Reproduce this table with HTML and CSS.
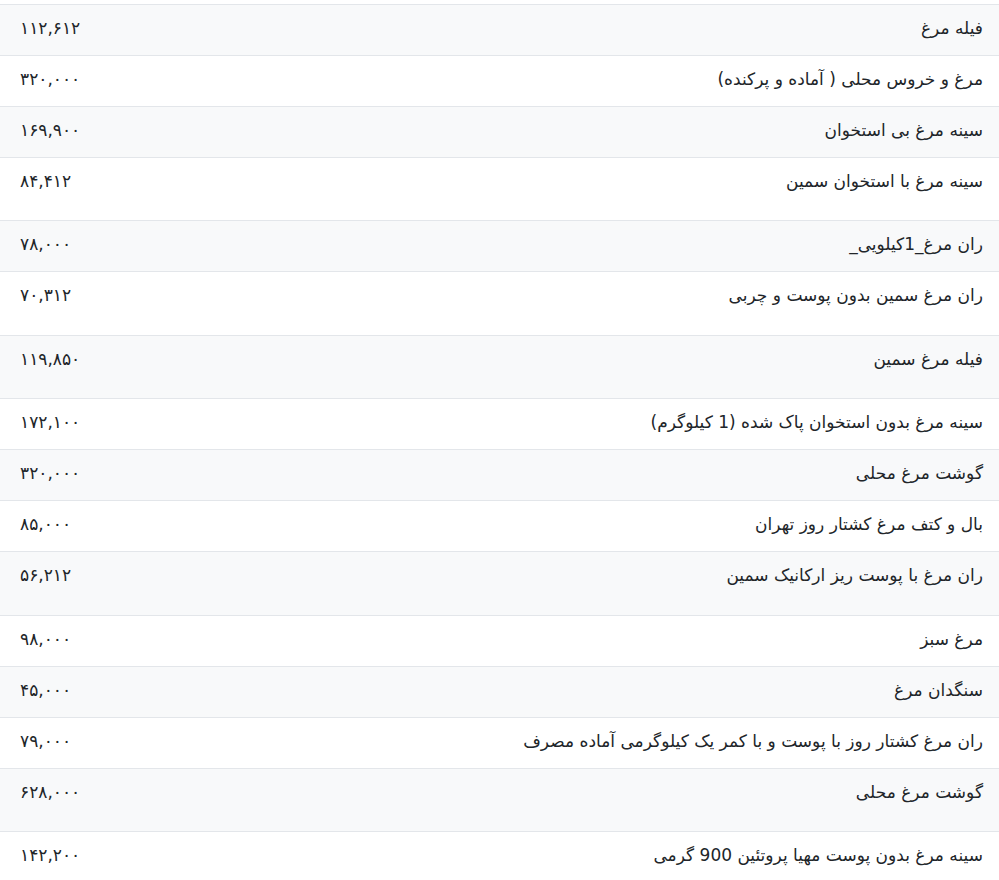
FILE: index.html
```html
<!DOCTYPE html>
<html lang="fa" dir="rtl">
<head>
<meta charset="utf-8">
<title>قیمت مرغ</title>
<link rel="stylesheet" href="styles.css">
</head>
<body>
<table class="prices">
  <tbody>
    <tr><td class="name">فیله مرغ</td><td class="price">۱۱۲,۶۱۲</td></tr>
    <tr><td class="name">مرغ و خروس محلی ( آماده و پرکنده)</td><td class="price">۳۲۰,۰۰۰</td></tr>
    <tr><td class="name">سینه مرغ بی استخوان</td><td class="price">۱۶۹,۹۰۰</td></tr>
    <tr class="tall"><td class="name">سینه مرغ با استخوان سمین</td><td class="price">۸۴,۴۱۲</td></tr>
    <tr><td class="name">ران مرغ_1کیلویی_</td><td class="price">۷۸,۰۰۰</td></tr>
    <tr class="tall"><td class="name">ران مرغ سمین بدون پوست و چربی</td><td class="price">۷۰,۳۱۲</td></tr>
    <tr class="tall"><td class="name">فیله مرغ سمین</td><td class="price">۱۱۹,۸۵۰</td></tr>
    <tr><td class="name">سینه مرغ بدون استخوان پاک شده (1 کیلوگرم)</td><td class="price">۱۷۲,۱۰۰</td></tr>
    <tr><td class="name">گوشت مرغ محلی</td><td class="price">۳۲۰,۰۰۰</td></tr>
    <tr><td class="name">بال و کتف مرغ کشتار روز تهران</td><td class="price">۸۵,۰۰۰</td></tr>
    <tr class="tall"><td class="name">ران مرغ با پوست ریز ارکانیک سمین</td><td class="price">۵۶,۲۱۲</td></tr>
    <tr><td class="name">مرغ سبز</td><td class="price">۹۸,۰۰۰</td></tr>
    <tr><td class="name">سنگدان مرغ</td><td class="price">۴۵,۰۰۰</td></tr>
    <tr><td class="name">ران مرغ کشتار روز با پوست و با کمر یک کیلوگرمی آماده مصرف</td><td class="price">۷۹,۰۰۰</td></tr>
    <tr class="tall"><td class="name">گوشت مرغ محلی</td><td class="price">۶۲۸,۰۰۰</td></tr>
    <tr><td class="name">سینه مرغ بدون پوست مهیا پروتئین 900 گرمی</td><td class="price">۱۴۲,۲۰۰</td></tr>
  </tbody>
</table>
</body>
</html>
```

FILE: styles.css
```css
html, body {
  margin: 0;
  padding: 0;
  background: #ffffff;
}
body {
  font-family: "DejaVu Sans", "Noto Sans", sans-serif;
  font-size: 17px;
  color: #212529;
}
.prices {
  width: 100%;
  margin-top: 4px;
  border-collapse: collapse;
}
.prices td {
  border-top: 1px solid #e3e6ea;
  padding: 10px 16px 14px 20px;
  line-height: 26px;
  vertical-align: top;
}
.prices tr:nth-child(odd) td {
  background: #f8f9fa;
}
.prices .name {
  text-align: right;
}
.prices .price {
  text-align: left;
  white-space: nowrap;
}
.prices tr.tall td {
  padding-bottom: 26.4px;
}
```
